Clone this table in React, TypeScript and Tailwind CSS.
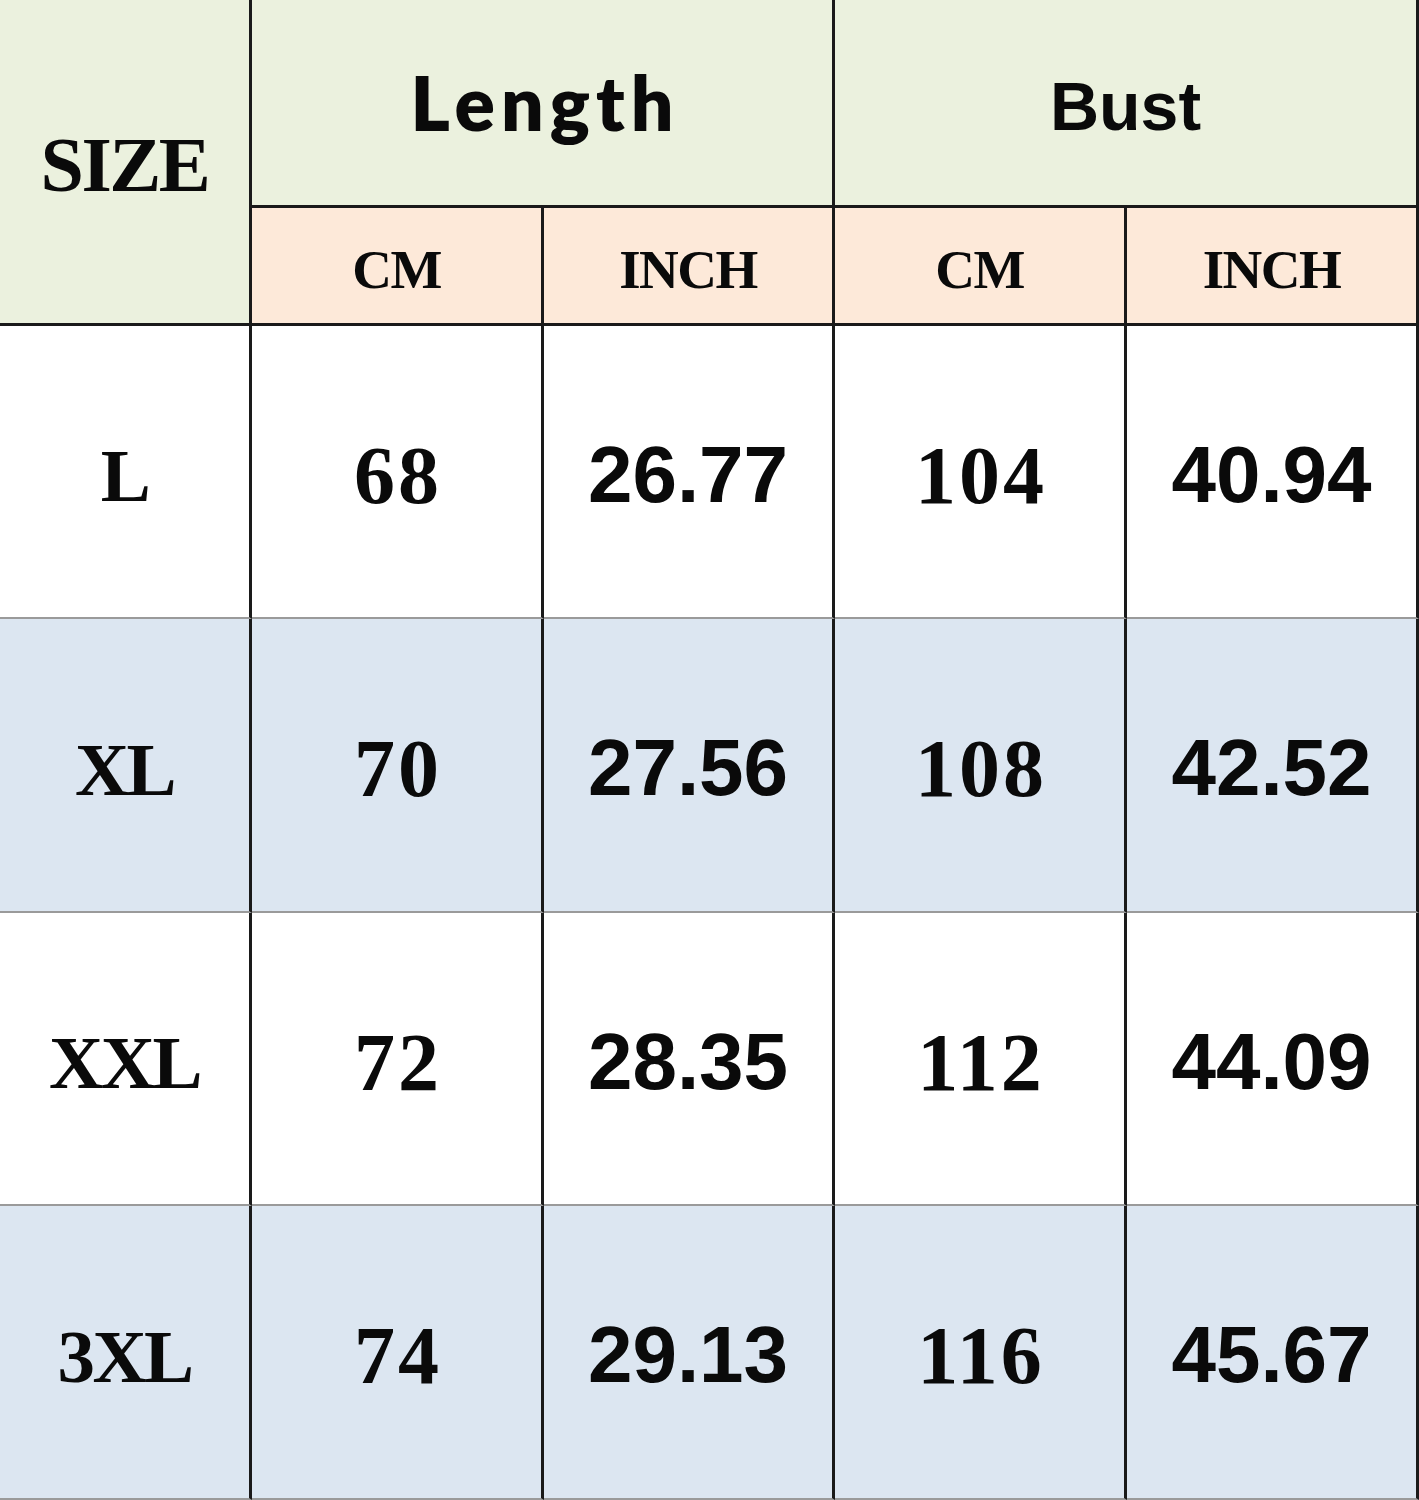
import React from "react";

const serif = "font-['Liberation_Serif','Times_New_Roman',serif] font-bold";
const sans = "font-['Liberation_Sans',Arial,sans-serif] font-bold";

const rows = [
  { size: "L", lcm: "68", lin: "26.77", bcm: "104", bin: "40.94", bg: "bg-white" },
  { size: "XL", lcm: "70", lin: "27.56", bcm: "108", bin: "42.52", bg: "bg-[#dce6f1]" },
  { size: "XXL", lcm: "72", lin: "28.35", bcm: "112", bin: "44.09", bg: "bg-white" },
  { size: "3XL", lcm: "74", lin: "29.13", bcm: "116", bin: "45.67", bg: "bg-[#dce6f1]" },
];

export default function App() {
  return (
    <div className="w-[1419px] h-[1500px] bg-white text-[#0a0a0a] overflow-hidden">
      <div className="grid grid-cols-[252px_292px_291px_292px_292px] grid-rows-[208px_118px_293px_294px_293px_294px] w-[1419px] h-[1500px]">
        {/* SIZE */}
        <div className="row-span-2 bg-[#ebf1de] border-r-[3px] border-b-[3px] border-[#1a1a1a] flex items-center justify-center">
          <span className={`${serif} text-[78px] leading-none tracking-[-2.5px] pt-[6px]`}>SIZE</span>
        </div>
        {/* Length */}
        <div className="col-span-2 bg-[#ebf1de] border-r-[3px] border-b-[3px] border-[#1a1a1a] flex items-center justify-center">
          <span className="font-['Lato','Open_Sans',sans-serif] font-extrabold text-[75px] leading-none tracking-[6px] pl-[6px]">Length</span>
        </div>
        {/* Bust */}
        <div className="col-span-2 bg-[#ebf1de] border-r-[3px] border-b-[3px] border-[#1a1a1a] flex items-center justify-center">
          <span className={`${sans} text-[68px] leading-none pt-[6px]`}>Bust</span>
        </div>
        {/* Sub headers */}
        {["CM", "INCH", "CM", "INCH"].map((t, i) => (
          <div
            key={i}
            className="bg-[#fde9d9] border-r-[3px] border-b-[3px] border-[#1a1a1a] flex items-center justify-center"
          >
            <span className={`${serif} text-[55px] leading-none tracking-[-1.5px] pt-[8px]`}>{t}</span>
          </div>
        ))}
        {/* Data rows */}
        {rows.map((r) => (
          <React.Fragment key={r.size}>
            <div className={`${r.bg} border-r-[3px] border-r-[#1a1a1a] border-b-2 border-b-[#9a9a9a] flex items-center justify-center`}>
              <span className={`${serif} text-[75px] leading-none tracking-[-2.5px] pt-[8px]`}>{r.size}</span>
            </div>
            <div className={`${r.bg} border-r-[3px] border-r-[#1a1a1a] border-b-2 border-b-[#9a9a9a] flex items-center justify-center`}>
              <span className={`${serif} text-[82px] leading-none tracking-[3px] pl-[3px] pt-[8px]`}>{r.lcm}</span>
            </div>
            <div className={`${r.bg} border-r-[3px] border-r-[#1a1a1a] border-b-2 border-b-[#9a9a9a] flex items-center justify-center`}>
              <span className={`${sans} text-[80px] leading-none pt-[6px]`}>{r.lin}</span>
            </div>
            <div className={`${r.bg} border-r-[3px] border-r-[#1a1a1a] border-b-2 border-b-[#9a9a9a] flex items-center justify-center`}>
              <span className={`${serif} text-[82px] leading-none tracking-[3px] pl-[3px] pt-[8px]`}>{r.bcm}</span>
            </div>
            <div className={`${r.bg} border-r-[3px] border-r-[#1a1a1a] border-b-2 border-b-[#9a9a9a] flex items-center justify-center`}>
              <span className={`${sans} text-[80px] leading-none pt-[6px]`}>{r.bin}</span>
            </div>
          </React.Fragment>
        ))}
      </div>
    </div>
  );
}
